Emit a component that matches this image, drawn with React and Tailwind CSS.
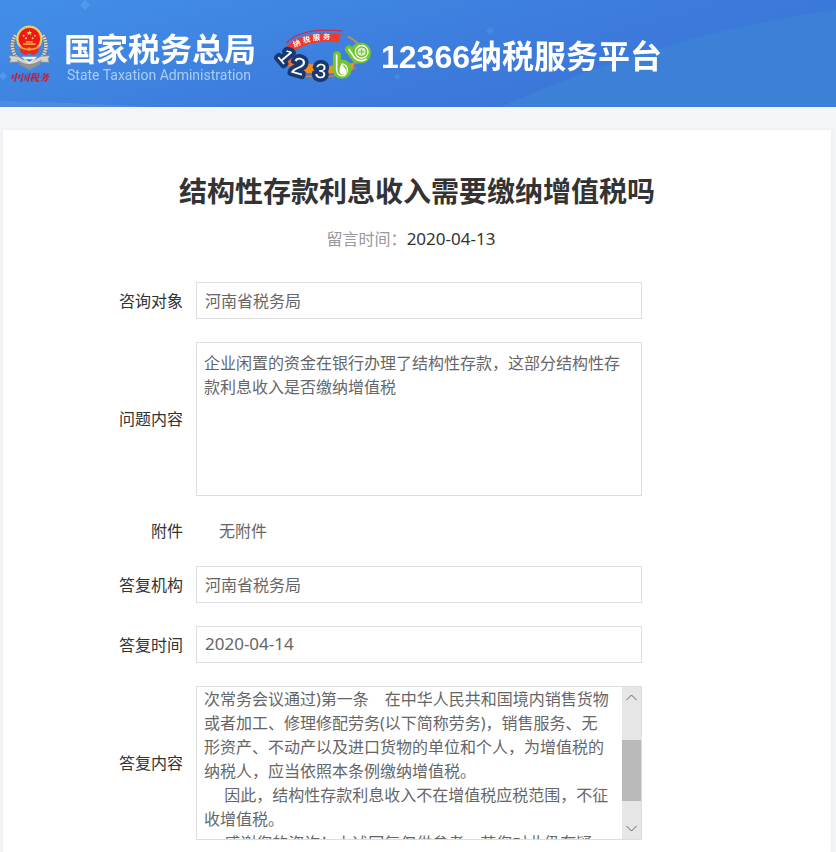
const question =
  "企业闲置的资金在银行办理了结构性存款，这部分结构性存款利息收入是否缴纳增值税";

const answer = [
  "次常务会议通过)第一条　在中华人民共和国境内销售货物",
  "或者加工、修理修配劳务(以下简称劳务)，销售服务、无",
  "形资产、不动产以及进口货物的单位和个人，为增值税的",
  "纳税人，应当依照本条例缴纳增值税。",
  "　 因此，结构性存款利息收入不在增值税应税范围，不征",
  "收增值税。",
  "　 感谢您的咨询！上述回复仅供参考，若您对此仍有疑",
].join("\n");

const App = () => (
  <div className="flex min-h-screen flex-col bg-[#f3f5f8] font-['Noto_Sans','Noto_Sans_CJK_SC',sans-serif] text-base text-[#333]">
    <Header />
    <main className="mt-[23px] mr-[5px] ml-[3px] flex-1 bg-white pt-[41px] pb-3 shadow-[0_0_4px_rgba(0,0,0,0.06)]">
      <h1 className="text-center text-[28px] leading-10 font-bold">
        结构性存款利息收入需要缴纳增值税吗
      </h1>
      <p className="mt-4 mr-3 text-center leading-6 text-[#999]">
        留言时间：<time className="text-[17px] text-[#333]">2020-04-13</time>
      </p>

      <form className="mt-[31px] flex flex-col gap-[23px]">
        <Row label="咨询对象" id="target">
          <TextField id="target" value="河南省税务局" />
        </Row>
        <Row label="问题内容" id="question">
          <textarea
            id="question"
            readOnly
            value={question}
            className="block h-[154px] w-full resize-none border border-[#ddd] px-[7px] py-2 leading-6 text-[#666] outline-none"
          />
        </Row>
        <Row label="附件">
          <p className="pl-[23px] leading-6 text-[#666]">无附件</p>
        </Row>
        <Row label="答复机构" id="office">
          <TextField id="office" value="河南省税务局" />
        </Row>
        <Row label="答复时间" id="date">
          <TextField id="date" value="2020-04-14" className="text-[17px]" />
        </Row>
        <Row label="答复内容" id="answer">
          <div className="flex h-[154px] border border-[#ddd]">
            <textarea
              id="answer"
              readOnly
              value={answer}
              className="block h-full min-w-0 flex-1 resize-none overflow-hidden pl-[7px] leading-6 whitespace-pre text-[#666] outline-none"
            />
            <ScrollBar />
          </div>
        </Row>
      </form>
    </main>
  </div>
);

const Row = ({ label, id, children }) => (
  <div className="flex items-center gap-[13px]">
    {id ? (
      <label htmlFor={id} className="w-[180px] shrink-0 text-right leading-6">
        {label}
      </label>
    ) : (
      <span className="w-[180px] shrink-0 text-right leading-6">{label}</span>
    )}
    <div className="max-w-[446px] min-w-0 flex-1">{children}</div>
  </div>
);

const TextField = ({ id, value, className = "" }) => (
  <input
    id={id}
    type="text"
    readOnly
    value={value}
    className={`block h-[37px] w-full border border-[#ddd] px-2 pb-0.5 text-[#666] outline-none ${className}`}
  />
);

const ScrollBar = () => (
  <div className="flex w-[19px] shrink-0 flex-col items-center bg-[#e6e6e6]">
    <svg viewBox="0 0 19 20" className="h-5 w-[19px]" fill="none" stroke="#666">
      <path d="M4.5 13 9.5 8l5 5" />
    </svg>
    <div className="mt-[33px] h-[61px] w-full bg-[#b9b9b9]" />
    <svg
      viewBox="0 0 19 20"
      className="mt-auto h-5 w-[19px]"
      fill="none"
      stroke="#666"
    >
      <path d="M4.5 7l5 5 5-5" />
    </svg>
  </div>
);

const Header = () => (
  <header className="relative flex h-[107px] items-center bg-linear-165 from-[#428fe8] via-[#3d7ddd] to-[#3770d5] pl-[7px]">
    <svg
      viewBox="0 0 836 107"
      preserveAspectRatio="none"
      className="absolute inset-0 h-full w-full"
    >
      <path d="M500 107Q670 32 836 10V107Z" fill="#3c80d7" />
      <path d="M0 101Q60 102 150 107H0Z" fill="#508be2" />
      <g fill="#5aa2ee" opacity=".7">
        <path d="M85 0l5 5-5 5-5-5z" />
        <path d="M3 72l4 4-4 4-4-4z" />
        <path d="M490 27l4 4-4 4-4-4z" opacity=".5" />
        <path d="M397 74l3 3-3 3-3-3z" opacity=".5" />
      </g>
    </svg>
    <Emblem />
    <div className="relative ml-3 w-[192px] pt-1.5 whitespace-nowrap">
      <p className="text-[32px] leading-9 font-bold text-white">国家税务总局</p>
      <p className="pl-[3px] font-['Roboto',sans-serif] text-[14px] leading-4 text-[#a9cdf7]">
        State Taxation Administration
      </p>
    </div>
    <HotlineLogo />
    <p className="relative ml-2 pt-1.5 font-['Liberation_Sans','Noto_Sans_CJK_SC',sans-serif] text-[32px] leading-10 font-bold whitespace-nowrap text-white">
      12366纳税服务平台
    </p>
  </header>
);

const Emblem = () => (
  <svg
    viewBox="21 72 135 186"
    className="relative h-[62px] w-[45px] shrink-0"
    fill="none"
  >
    {/* wheat ears */}
    <path
      d="M47 109C30 133 35 165 62 190M128 109C145 133 140 165 113 190"
      stroke="#69737c"
      strokeWidth="14"
    />
    <path
      d="M47 109C30 133 35 165 62 190M128 109C145 133 140 165 113 190"
      stroke="#d4d6d2"
      strokeWidth="11"
      strokeDasharray="5 3"
    />
    {/* ribbon */}
    <path
      d="M26 170l28 2q30 25 68 0l28-2-6 11 4 9-27-1-33 23-33-23-27 1 4-9z"
      fill="#d3d4d0"
      stroke="#858a8c"
      strokeWidth="2"
    />
    <path d="M50 181q37 28 76 0l-8 16-30 15-30-15z" fill="#8d9395" />
    <path d="M64 173h48l-24 22z" fill="#f0f0e8" />
    <path d="M76 181h24l-12 8z" fill="#348bdd" />
    {/* national emblem */}
    <circle cx="88" cy="119" r="38" fill="#f7bd43" stroke="#e9e095" strokeWidth="3" />
    <circle cx="88" cy="119" r="32" fill="#ef1717" />
    <path d="M58 143h60l-4 17-14 9-12-6-12 6-14-9z" fill="#e92b20" />
    <path d="M60 145q28 14 56 0" stroke="#f4a43c" strokeWidth="5" />
    <path d="M69 133h38v5H69zM78 126h20v5H78zM82 150l6-5 6 5-6 6z" fill="#f6a32e" />
    <path
      d="M88 94l2 5h6l-4 4 2 6-6-4-6 4 2-6-4-4h6z"
      fill="#ffd75c"
    />
    <g fill="#ffd75c">
      <circle cx="71" cy="110" r="3" />
      <circle cx="78" cy="118" r="3" />
      <circle cx="98" cy="118" r="3" />
      <circle cx="105" cy="110" r="3" />
    </g>
    <text
      x="30"
      y="246"
      fill="#c51c32"
      fontSize="29"
      fontWeight="900"
      fontStyle="italic"
      fontFamily="'Noto Serif CJK SC','Noto Sans CJK SC',serif"
    >
      中国税务
    </text>
  </svg>
);

const HotlineLogo = () => (
  <svg
    viewBox="24 24 300 176"
    className="relative ml-[17px] h-[59px] w-[100px] shrink-0 overflow-visible"
    fill="none"
    fontFamily="'Liberation Sans','Noto Sans CJK SC',sans-serif"
    fontWeight="700"
    textAnchor="middle"
  >
    <path d="M64 82Q105 33 231 44" stroke="#d32c48" strokeWidth="4" />
    <path d="M60 100C76 64 145 44 229 52L220 79C153 70 103 88 82 112Q84 120 92 126L68 150Q50 118 60 100Z" fill="#ef3d2d" />
    <path d="M64 124Q70 118 88 125L97 150 68 151Z" fill="#f36a28" />
    <path d="M248 61Q276 74 286 94" stroke="#d68a4d" strokeWidth="5" />
    <path d="M110 138Q197 160 270 138L264 158Q195 181 119 169Z" fill="#f58b20" />
    <path d="M122 180Q210 193 274 154" stroke="#dc8840" strokeWidth="3" />
    <g fill="#fff" fontSize="22">
      <text transform="translate(98 89) rotate(-22)">纳</text>
      <text transform="translate(126 78) rotate(-12)">税</text>
      <text transform="translate(155 72) rotate(-5)">服</text>
      <text transform="translate(184 70) rotate(3)">务</text>
    </g>
    <g
      fill="#fff"
      stroke="#17396f"
      strokeWidth="22"
      strokeLinejoin="round"
      paintOrder="stroke"
      fontWeight="400"
    >
      <text transform="translate(46 134) rotate(50)" fontSize="62">1</text>
      <text transform="translate(94 174) rotate(16)" fontSize="72">2</text>
      <text transform="translate(165 186) rotate(6)" fontSize="62">3</text>
    </g>
    {/* the two sixes: a water drop and a dial */}
    <g strokeLinecap="round" strokeLinejoin="round">
      <path d="M216 117L215 160" stroke="#72c52d" strokeWidth="24" />
      <circle cx="231" cy="159" r="29" fill="#72c52d" />
      <path d="M215 117V161" stroke="#fff" strokeWidth="5" />
      <path
        d="M215 161a16 18 0 1 0 17-18"
        stroke="#fff"
        strokeWidth="4"
      />
      <path d="M229 143q17 16 13 26-7 12-16 3-6-8 3-29Z" fill="#fff" />
      <path d="M252 100L275 130" stroke="#72c52d" strokeWidth="24" />
      <circle cx="287" cy="110" r="31" fill="#72c52d" />
      <path d="M252 100L269 125Q285 140 303 129" stroke="#fff" strokeWidth="5" />
      <circle cx="290" cy="107" r="19" stroke="#fff" strokeWidth="4" />
      <circle cx="290" cy="107" r="12" fill="#d8f0c3" />
      <path d="M283 107h14M290 100v14" stroke="#72c52d" strokeWidth="3" />
    </g>
  </svg>
);

export default App;
